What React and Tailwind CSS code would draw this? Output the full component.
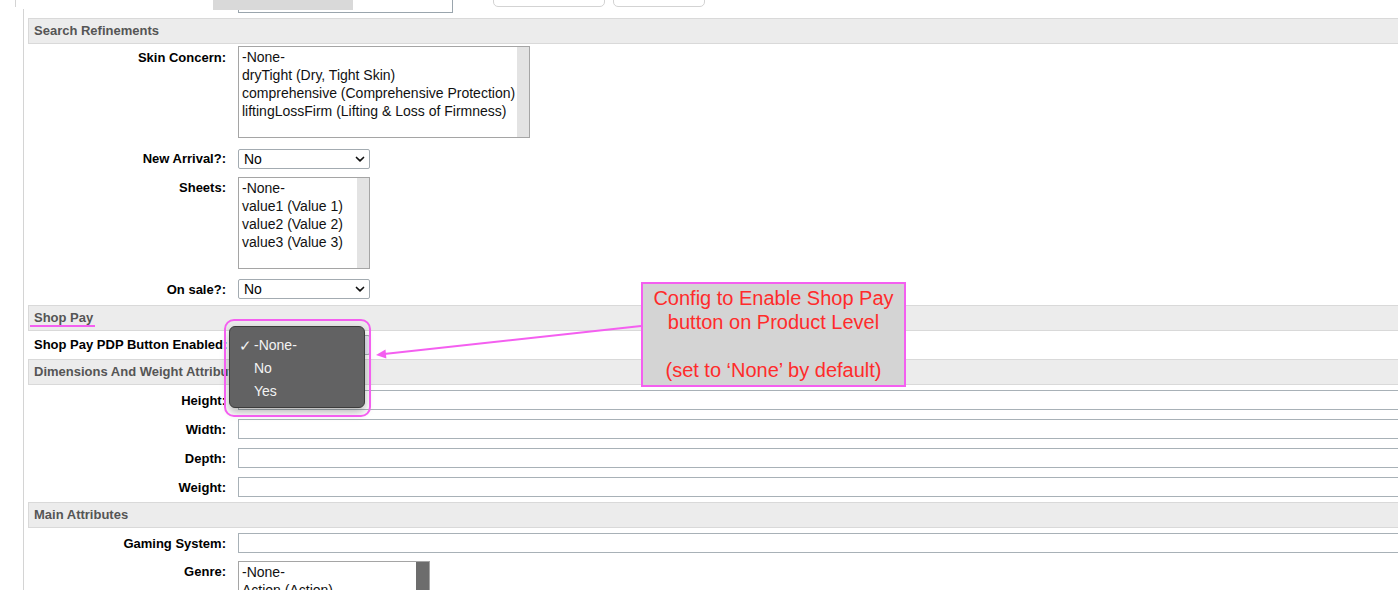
import React from "react";

const PINK = "#f45ff0";

function Header({ children }) {
  return (
    <div className="h-[26px] shrink-0 bg-[#ececec] border-y border-l border-[#d9d9d9] flex items-center pl-[5px] text-[13px] font-bold text-[#555] whitespace-nowrap">
      {children}
    </div>
  );
}

function Row({ h, top, label, labelLeft, labelTop = 1, children }) {
  return (
    <div className={`flex shrink-0 ${h}`}>
      <div
        className={`w-[198px] shrink-0 text-[13px] font-bold text-black leading-[20px] whitespace-nowrap ${
          labelLeft ? "text-left pl-[6px]" : "text-right"
        } ${top}`}
        style={{ paddingTop: labelTop }}
      >
        {label}
      </div>
      <div className={`ml-[12px] ${top}`}>{children}</div>
    </div>
  );
}

function Chevron() {
  return (
    <svg width="10" height="7" viewBox="0 0 10 7" className="shrink-0">
      <path d="M1.5 1.5 L5 4.8 L8.5 1.5" fill="none" stroke="#111" strokeWidth="1.7" strokeLinecap="round" strokeLinejoin="round" />
    </svg>
  );
}

function Select({ value, tint }) {
  return (
    <div
      className={`w-[132px] h-[20px] border border-[#a3abb1] rounded-[2px] flex items-center justify-between pl-[5px] pr-[4px] text-[14px] text-black ${
        tint ? "bg-[#ebe9f6]" : "bg-white"
      }`}
    >
      <span>{value}</span>
      <Chevron />
    </div>
  );
}

function Listbox({ w, items, dark }) {
  return (
    <div className={`${w} h-[92px] border border-[#a5a5a5] flex bg-white overflow-hidden`}>
      <div className="flex-1 pl-[3px] pt-[1px] text-[14px] leading-[18px] text-[#111] whitespace-nowrap overflow-hidden">
        {items.map((it) => (
          <div key={it}>{it}</div>
        ))}
      </div>
      <div className={`shrink-0 ${dark ? "w-[13px] bg-[#6d6d6d]" : "w-[12px] bg-[#e3e3e3]"}`} />
    </div>
  );
}

function TextInput() {
  return <div className="w-[1200px] h-[20px] border border-[#a8b1b7] bg-white" />;
}

export default function App() {
  return (
    <div className="relative w-[1398px] h-[590px] overflow-hidden bg-white font-['Liberation_Sans',Arial,sans-serif]">
      <div className="flex h-full">
        {/* left gutter */}
        <div className="w-[23px] shrink-0">
          <div className="ml-[15px] w-px h-[7px] bg-[#d4d4d4]" />
        </div>

        <div className="flex-1 flex flex-col min-w-0">
          {/* clipped controls from the section above */}
          <div className="flex h-[18px] shrink-0 items-start">
            <div className="w-px h-[9px] mt-[9px] bg-[#d4d4d4] shrink-0" />
            <div className="ml-[189px] w-[140px] h-[10px] bg-[#d9d9d9] relative z-10 shrink-0" />
            <div className="ml-[-115px] w-[215px] h-[13px] border-x border-b border-[#9aa5ad] shrink-0" />
            <div className="ml-[40px] mt-[-5px] w-[112px] h-[12px] border border-[#d3d3d3] rounded-[5px] shrink-0" />
            <div className="ml-[8px] mt-[-5px] w-[92px] h-[12px] border border-[#d3d3d3] rounded-[5px] shrink-0" />
          </div>

          <div className="flex-1 flex flex-col border-l border-[#d4d4d4] pl-[4px] min-w-0">
            <Header>Search Refinements</Header>
            <Row h="h-[100px]" top="mt-[2px]" labelTop={2} label="Skin Concern:">
              <Listbox
                w="w-[292px]"
                items={[
                  "-None-",
                  "dryTight (Dry, Tight Skin)",
                  "comprehensive (Comprehensive Protection)",
                  "liftingLossFirm (Lifting & Loss of Firmness)",
                ]}
              />
            </Row>
            <Row h="h-[30px]" top="mt-[5px]" labelTop={0} label="New Arrival?:">
              <Select value="No" />
            </Row>
            <Row h="h-[100px]" top="mt-[3px]" labelTop={1} label="Sheets:">
              <Listbox
                w="w-[132px]"
                items={["-None-", "value1 (Value 1)", "value2 (Value 2)", "value3 (Value 3)"]}
              />
            </Row>
            <Row h="h-[31px]" top="mt-[5px]" label="On sale?:">
              <Select value="No" />
            </Row>

            <Header>Shop Pay</Header>
            <Row h="h-[28px]" top="mt-[4px]" labelTop={0} labelLeft label="Shop Pay PDP Button Enabled:">
              <Select value="" tint />
            </Row>

            <Header>Dimensions And Weight Attributes</Header>
            <Row h="h-[29px]" top="mt-[5px]" label="Height:">
              <TextInput />
            </Row>
            <Row h="h-[29px]" top="mt-[5px]" label="Width:">
              <TextInput />
            </Row>
            <Row h="h-[29px]" top="mt-[5px]" label="Depth:">
              <TextInput />
            </Row>
            <Row h="h-[30px]" top="mt-[5px]" label="Weight:">
              <TextInput />
            </Row>

            <Header>Main Attributes</Header>
            <Row h="h-[29px]" top="mt-[5px]" label="Gaming System:">
              <TextInput />
            </Row>
            <Row h="h-[100px]" top="mt-[4px]" labelTop={1} label="Genre:">
              <Listbox w="w-[192px]" dark items={["-None-", "Action (Action)", "Adventure (Adventure)"]} />
            </Row>
          </div>
        </div>
      </div>

      {/* annotation: underline under Shop Pay */}
      <div className="absolute left-[30px] top-[325px] w-[65px] h-[2px] bg-[#f45ff0]" />

      {/* open native menu */}
      <div className="absolute left-[229px] top-[326px] w-[136px] h-[82px] rounded-[6px] bg-[#626263] border border-[#3b3b3b] shadow-[0_4px_10px_rgba(0,0,0,0.3)] pt-[7px] text-[14px] text-[#f3f3f3]">
        <div className="h-[23px] leading-[23px] flex">
          <span className="w-[24px] pl-[9px] text-[15px]">✓</span>
          <span>-None-</span>
        </div>
        <div className="h-[23px] leading-[23px] pl-[24px]">No</div>
        <div className="h-[23px] leading-[23px] pl-[24px]">Yes</div>
      </div>
      <div className="absolute left-[224px] top-[319px] w-[147px] h-[98px] border-2 border-[#f45ff0] rounded-[10px]" />

      {/* callout */}
      <div className="absolute left-[641px] top-[282px] w-[265px] h-[105px] border-2 border-[#f45ff0] bg-[#d4d4d4] pt-[2px] text-center text-[20px] leading-[24px] text-[#ff2b2b]">
        <div>Config to Enable Shop Pay</div>
        <div>button on Product Level</div>
        <div>&nbsp;</div>
        <div>(set to ‘None’ by default)</div>
      </div>

      <svg className="absolute inset-0 pointer-events-none" width="1398" height="590">
        <line x1="641" y1="326" x2="384" y2="354" stroke={PINK} strokeWidth="2" />
        <polygon points="376,355 386.4,358.4 385.5,349.4" fill={PINK} />
      </svg>
    </div>
  );
}
